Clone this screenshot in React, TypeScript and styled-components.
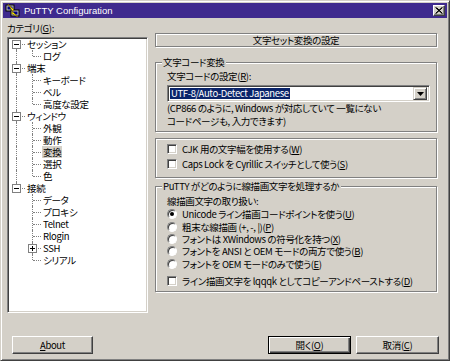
import React from "react";
import styled, { createGlobalStyle } from "styled-components";

const GlobalStyle = createGlobalStyle`
  html, body {
    margin: 0;
    padding: 0;
    background: #d4d0c8;
  }
  body {
    font-family: "Noto Sans CJK JP", "Liberation Sans", sans-serif;
    font-size: 9.5px;
    letter-spacing: -0.35px;
    color: #000;
    font-feature-settings: "palt";
  }
`;

const Window = styled.div`
  width: 450px;
  height: 361px;
  box-sizing: border-box;
  background: #d4d0c8;
  border: 1px solid;
  border-color: #d4d0c8 #404040 #404040 #d4d0c8;
  box-shadow: inset 1px 1px 0 #fff, inset -1px -1px 0 #808080;
  padding: 2px;
  display: flex;
  flex-direction: column;
`;

const TitleBar = styled.div`
  height: 15px;
  background: #3f2a8e;
  display: flex;
  align-items: center;
  padding: 0 2px 0 2px;
  gap: 3px;
`;

const TitleText = styled.span`
  flex: 1;
  color: #fff;
  font-family: "Liberation Sans", Arial, sans-serif;
  font-size: 9.5px;
  letter-spacing: 0;
  line-height: 15px;
`;

const CloseButton = styled.div`
  width: 12px;
  height: 11px;
  box-sizing: border-box;
  background: #d4d0c8;
  border: 1px solid;
  border-color: #fff #404040 #404040 #fff;
  box-shadow: inset -1px -1px 0 #808080;
  display: flex;
  align-items: center;
  justify-content: center;
`;

const Panels = styled.div`
  display: flex;
  height: 295px;
`;

const LeftColumn = styled.div`
  width: 141px;
  padding: 4px 0 0 4px;
  display: flex;
  flex-direction: column;
`;

const Label = styled.div<{ $height?: number }>`
  height: ${(p) => p.$height ?? 12}px;
  line-height: ${(p) => p.$height ?? 12}px;
  white-space: nowrap;
`;

const TreeBox = styled.div`
  margin-top: 3px;
  height: 276px;
  box-sizing: border-box;
  background: #fff;
  border: 1px solid;
  border-color: #808080 #fff #fff #808080;
  box-shadow: inset 1px 1px 0 #404040, inset -1px -1px 0 #d4d0c8;
  padding: 0 1px;
  overflow: hidden;
`;

const TreeRow = styled.div`
  display: flex;
  height: 12px;
  align-items: stretch;
`;

const Indent = styled.div<{ $line: boolean }>`
  width: 16px;
  flex: none;
  position: relative;
  &::before {
    content: "";
    display: ${(p) => (p.$line ? "block" : "none")};
    position: absolute;
    left: 7px;
    top: 0;
    bottom: 0;
    border-left: 1px dotted #808080;
  }
`;

const Connector = styled.div<{ $up: boolean; $down: boolean }>`
  width: 16px;
  flex: none;
  position: relative;
  &::before {
    content: "";
    position: absolute;
    left: 7px;
    top: ${(p) => (p.$up ? "0" : "6px")};
    bottom: ${(p) => (p.$down ? "0" : "6px")};
    border-left: 1px dotted #808080;
  }
  &::after {
    content: "";
    position: absolute;
    left: 8px;
    right: 0;
    top: 6px;
    border-top: 1px dotted #808080;
  }
`;

const ExpandBox = styled.div`
  position: absolute;
  left: 3px;
  top: 2px;
  width: 9px;
  height: 9px;
  box-sizing: border-box;
  border: 1px solid #808080;
  background: #fff;
  z-index: 1;
  display: flex;
  align-items: center;
  justify-content: center;
`;

const TreeLabel = styled.span<{ $selected?: boolean }>`
  line-height: 12px;
  padding: 0 1px;
  margin-left: 1px;
  white-space: nowrap;
  background: ${(p) => (p.$selected ? "#d4d0c8" : "transparent")};
`;

const RightColumn = styled.div`
  width: 282px;
  margin-left: 7px;
  padding-top: 15px;
  display: flex;
  flex-direction: column;
`;

const Heading = styled.div`
  height: 14px;
  box-sizing: border-box;
  border: 1px solid #808080;
  box-shadow: inset 1px 1px 0 #fff, 1px 1px 0 #fff;
  text-align: center;
  line-height: 12px;
`;

const Group = styled.div<{ $height: number; $gap: number; $pad: string }>`
  position: relative;
  height: ${(p) => p.$height}px;
  margin-top: ${(p) => p.$gap}px;
  box-sizing: border-box;
  border: 1px solid #808080;
  box-shadow: inset 1px 1px 0 #fff, 1px 1px 0 #fff;
  padding: ${(p) => p.$pad};
  display: flex;
  flex-direction: column;
`;

const Legend = styled.span`
  position: absolute;
  top: -7px;
  left: 6px;
  padding: 0 2px 0 1px;
  background: #d4d0c8;
  line-height: 12px;
  white-space: nowrap;
`;

const Combo = styled.div`
  margin-top: 3px;
  width: 263px;
  height: 17px;
  box-sizing: border-box;
  background: #fff;
  border: 1px solid;
  border-color: #808080 #fff #fff #808080;
  box-shadow: inset 1px 1px 0 #404040, inset -1px -1px 0 #d4d0c8;
  padding: 2px;
  display: flex;
  align-items: center;
`;

const ComboValue = styled.span`
  flex: 1;
  display: flex;
  & > span {
    background: #0a246a;
    color: #fff;
    line-height: 11px;
    padding: 0 1px;
    white-space: nowrap;
  }
`;

const DropButton = styled.div`
  width: 14px;
  height: 13px;
  box-sizing: border-box;
  background: #d4d0c8;
  border: 1px solid;
  border-color: #d4d0c8 #404040 #404040 #d4d0c8;
  box-shadow: inset 1px 1px 0 #fff, inset -1px -1px 0 #808080;
  display: flex;
  align-items: center;
  justify-content: center;
`;

const Note = styled.div`
  line-height: 13px;
  white-space: nowrap;
`;

const OptionRow = styled.div<{ $height: number; $gap?: number }>`
  display: flex;
  align-items: center;
  height: ${(p) => p.$height}px;
  margin-top: ${(p) => p.$gap ?? 0}px;
  gap: 5px;
  white-space: nowrap;
  line-height: 12px;
`;

const CheckBox = styled.span`
  width: 10px;
  height: 10px;
  flex: none;
  box-sizing: border-box;
  background: #fff;
  border: 1px solid;
  border-color: #808080 #fff #fff #808080;
  box-shadow: inset 1px 1px 0 #404040, inset -1px -1px 0 #d4d0c8;
`;

const Radio = styled.span<{ $checked?: boolean }>`
  width: 10px;
  height: 10px;
  flex: none;
  box-sizing: border-box;
  border-radius: 50%;
  background: #fff;
  border: 1px solid;
  border-color: #808080 #fff #fff #808080;
  box-shadow: inset 1px 1px 0 #404040;
  display: flex;
  align-items: center;
  justify-content: center;
  &::after {
    content: "";
    width: 4px;
    height: 4px;
    border-radius: 50%;
    background: #000;
    display: ${(p) => (p.$checked ? "block" : "none")};
  }
`;

const Footer = styled.div`
  display: flex;
  align-items: flex-start;
  margin-top: 23px;
  padding: 0 8px 0 9px;
  gap: 5px;
`;

const Button = styled.div<{ $default?: boolean; $width: number }>`
  width: ${(p) => p.$width}px;
  height: 18px;
  box-sizing: border-box;
  background: #d4d0c8;
  border: 1px solid;
  border-color: ${(p) =>
    p.$default ? "#000" : "#fff #404040 #404040 #fff"};
  box-shadow: ${(p) =>
    p.$default
      ? "inset 1px 1px 0 #fff, inset -1px -1px 0 #404040, inset -2px -2px 0 #808080"
      : "inset -1px -1px 0 #808080"};
  display: flex;
  align-items: center;
  justify-content: center;
  line-height: 12px;
`;

const Spacer = styled.div`
  flex: 1;
`;

type TreeItem = {
  label: string;
  depth: number;
  box?: "minus" | "plus";
  selected?: boolean;
};

const treeItems: TreeItem[] = [
  { label: "セッション", depth: 0, box: "minus" },
  { label: "ログ", depth: 1 },
  { label: "端末", depth: 0, box: "minus" },
  { label: "キーボード", depth: 1 },
  { label: "ベル", depth: 1 },
  { label: "高度な設定", depth: 1 },
  { label: "ウィンドウ", depth: 0, box: "minus" },
  { label: "外観", depth: 1 },
  { label: "動作", depth: 1 },
  { label: "変換", depth: 1, selected: true },
  { label: "選択", depth: 1 },
  { label: "色", depth: 1 },
  { label: "接続", depth: 0, box: "minus" },
  { label: "データ", depth: 1 },
  { label: "プロキシ", depth: 1 },
  { label: "Telnet", depth: 1 },
  { label: "Rlogin", depth: 1 },
  { label: "SSH", depth: 1, box: "plus" },
  { label: "シリアル", depth: 1 },
];

// does a sibling at `depth` follow row i before the tree climbs above it
function hasNextSibling(i: number, depth: number) {
  for (let j = i + 1; j < treeItems.length; j++) {
    if (treeItems[j].depth < depth) return false;
    if (treeItems[j].depth === depth) return true;
  }
  return false;
}

function PuttyIcon() {
  return (
    <svg width="16" height="14" viewBox="0 0 16 14">
      <rect x="1" y="1" width="8" height="6" fill="#c0c0c0" stroke="#000" strokeWidth="1" />
      <rect x="2.5" y="2.5" width="5" height="3" fill="#000080" />
      <rect x="6" y="6" width="8" height="6" fill="#c0c0c0" stroke="#000" strokeWidth="1" />
      <rect x="7.5" y="7.5" width="5" height="3" fill="#000080" />
      <path d="M3 0 L9 6 L7 7 L13 13 L6 9 L8 8 Z" fill="#ffff00" stroke="#806000" strokeWidth="0.6" />
    </svg>
  );
}

function Tree() {
  return (
    <TreeBox>
      {treeItems.map((item, i) => {
        const guides = [];
        for (let d = 0; d < item.depth; d++) {
          guides.push(<Indent key={d} $line={hasNextSibling(i, d)} />);
        }
        return (
          <TreeRow key={item.label}>
            {guides}
            <Connector $up={i !== 0} $down={hasNextSibling(i, item.depth)}>
              {item.box && (
                <ExpandBox>
                  <svg width="7" height="7" viewBox="0 0 7 7">
                    <rect x="1" y="3" width="5" height="1" fill="#000" />
                    {item.box === "plus" && <rect x="3" y="1" width="1" height="5" fill="#000" />}
                  </svg>
                </ExpandBox>
              )}
            </Connector>
            <TreeLabel $selected={item.selected}>{item.label}</TreeLabel>
          </TreeRow>
        );
      })}
    </TreeBox>
  );
}

const radios = [
  { text: "Unicode ライン描画コードポイントを使う", key: "U", checked: true },
  { text: "粗末な線描画 (+, -, |)", key: "P" },
  { text: "フォントは XWindows の符号化を持つ", key: "X" },
  { text: "フォントを ANSI と OEM モードの両方で使う", key: "B" },
  { text: "フォントを OEM モードのみで使う", key: "E" },
];

export default function App() {
  return (
    <>
      <GlobalStyle />
      <Window>
        <TitleBar>
          <PuttyIcon />
          <TitleText>PuTTY Configuration</TitleText>
          <CloseButton>
            <svg width="8" height="7" viewBox="0 0 8 7">
              <path d="M0.5 0.5 L7 6.5 M1.5 0.5 L7.5 6.5 M7 0.5 L0.5 6.5 M7.5 0.5 L1 6.5" stroke="#000" strokeWidth="1" />
            </svg>
          </CloseButton>
        </TitleBar>
        <Panels>
          <LeftColumn>
            <Label>
              カテゴリ(<u>G</u>):
            </Label>
            <Tree />
          </LeftColumn>
          <RightColumn>
            <Heading>文字セット変換の設定</Heading>
            <Group $height={70} $gap={15} $pad="7px 0 0 11px">
              <Legend>文字コード変換</Legend>
              <Label>
                文字コードの設定(<u>R</u>):
              </Label>
              <Combo>
                <ComboValue>
                  <span>UTF-8/Auto-Detect Japanese</span>
                </ComboValue>
                <DropButton>
                  <svg width="7" height="4" viewBox="0 0 7 4">
                    <path d="M0 0 H7 L3.5 4 Z" fill="#000" />
                  </svg>
                </DropButton>
              </Combo>
              <Note>(CP866 のように, Windows が対応していて 一覧にない</Note>
              <Note>コードページも, 入力できます)</Note>
            </Group>
            <Group $height={40} $gap={6} $pad="3px 0 0 11px">
              <OptionRow $height={14.5}>
                <CheckBox />
                <span>
                  CJK 用の文字幅を使用する(<u>W</u>)
                </span>
              </OptionRow>
              <OptionRow $height={14.5}>
                <CheckBox />
                <span>
                  Caps Lock を Cyrillic スイッチとして使う(<u>S</u>)
                </span>
              </OptionRow>
            </Group>
            <Group $height={106} $gap={8} $pad="8px 0 0 11px">
              <Legend>PuTTY がどのように線描画文字を処理するか</Legend>
              <Label $height={13}>線描画文字の取り扱い:</Label>
              {radios.map((r) => (
                <OptionRow key={r.key} $height={12.4}>
                  <Radio $checked={r.checked} />
                  <span>
                    {r.text}(<u>{r.key}</u>)
                  </span>
                </OptionRow>
              ))}
              <OptionRow $height={12} $gap={5}>
                <CheckBox />
                <span>
                  ライン描画文字を lqqqk としてコピーアンドペーストする(<u>D</u>)
                </span>
              </OptionRow>
            </Group>
          </RightColumn>
        </Panels>
        <Footer>
          <Button $width={81}>
            <span>
              <u>A</u>bout
            </span>
          </Button>
          <Spacer />
          <Button $default $width={83}>
            <span>
              開く(<u>O</u>)
            </span>
          </Button>
          <Button $width={83}>
            <span>
              取消(<u>C</u>)
            </span>
          </Button>
        </Footer>
      </Window>
    </>
  );
}
